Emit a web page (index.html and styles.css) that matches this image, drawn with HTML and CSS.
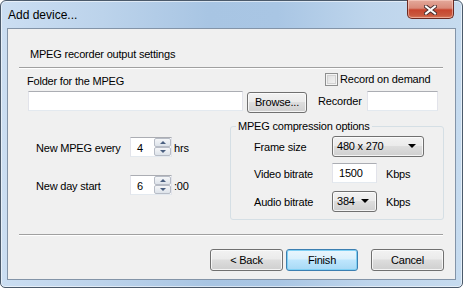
FILE: index.html
```html
<!DOCTYPE html>
<html>
<head>
<meta charset="utf-8">
<title>Add device...</title>
<link rel="stylesheet" href="styles.css">
</head>
<body>
<div class="window">
  <div class="titlebar">
    <span class="title">Add device...</span>
    <div class="close">
      <svg width="13" height="10" viewBox="0 0 13 10">
        <path d="M2 1.5 L11 8.5 M11 1.5 L2 8.5" stroke="#4a3030" stroke-width="4" stroke-linecap="square" fill="none"/>
        <path d="M2 1.5 L11 8.5 M11 1.5 L2 8.5" stroke="#ffffff" stroke-width="2" stroke-linecap="square" fill="none"/>
      </svg>
    </div>
  </div>
  <div class="client">
    <div class="section-title">MPEG recorder output settings</div>
    <div class="sep sep-top"></div>
    <div class="row-folder-label">
      <span class="folder-label">Folder for the MPEG</span>
      <div class="check"><span class="box"></span><span class="check-text">Record on demand</span></div>
    </div>
    <div class="row-folder">
      <div class="input folder-input"></div>
      <div class="btn browse">Browse...</div>
      <span class="rec-label">Recorder</span>
      <div class="input rec-input"></div>
    </div>
    <div class="area">
      <div class="left">
        <div class="spin-row first">
          <span class="spin-label">New MPEG every</span>
          <div class="spin input">
            <span class="spin-val">4</span>
            <div class="spin-btns"><span class="sb up"><i class="tri-up"></i></span><span class="sb down"><i class="tri-down"></i></span></div>
          </div>
          <span class="unit">hrs</span>
        </div>
        <div class="spin-row second">
          <span class="spin-label">New day start</span>
          <div class="spin input">
            <span class="spin-val">6</span>
            <div class="spin-btns"><span class="sb up"><i class="tri-up"></i></span><span class="sb down"><i class="tri-down"></i></span></div>
          </div>
          <span class="unit">:00</span>
        </div>
      </div>
      <fieldset class="group">
        <legend>MPEG compression options</legend>
        <div class="opt-row r1">
          <span class="opt-label">Frame size</span>
          <div class="combo frame"><span class="combo-text">480 x 270</span><i class="combo-arrow"></i></div>
        </div>
        <div class="opt-row r2">
          <span class="opt-label">Video bitrate</span>
          <div class="input video"><span class="input-text">1500</span></div>
          <span class="kbps">Kbps</span>
        </div>
        <div class="opt-row r3">
          <span class="opt-label">Audio bitrate</span>
          <div class="combo audio"><span class="combo-text">384</span><i class="combo-arrow"></i></div>
          <span class="kbps">Kbps</span>
        </div>
      </fieldset>
    </div>
    <div class="sep sep-bottom"></div>
    <div class="buttons">
      <div class="btn back">&lt; Back</div>
      <div class="btn finish">Finish</div>
      <div class="btn cancel">Cancel</div>
    </div>
  </div>
</div>
</body>
</html>
```
FILE: styles.css
```css
* { box-sizing: border-box; }
html, body { margin: 0; padding: 0; }
body {
  font: 11px/13px "Liberation Sans", Arial, sans-serif;
  letter-spacing: -0.2px;
  color: #000;
  background: #fff;
}
.window {
  width: 463px;
  height: 288px;
  border: 1px solid #4b5a6b;
  border-radius: 6px 6px 5px 5px;
  background: linear-gradient(90deg, #cbdef2 0%, #bcd3eb 22%, #a8c5e3 45%, #a9c6e4 60%, #bed5ec 80%, #c6dbef 100%);
  padding: 0 6px 7px 6px;
  display: flex;
  flex-direction: column;
  box-shadow: inset 0 0 0 1px rgba(255,255,255,0.55);
}
.titlebar {
  height: 27px;
  display: flex;
  align-items: flex-start;
}
.title {
  font-size: 12px;
  line-height: 14px;
  letter-spacing: 0;
  margin: 7px 0 0 1px;
  color: #000;
}
.close {
  margin-left: auto;
  margin-right: 2px;
  margin-top: -1px;
  width: 47px;
  height: 19px;
  border: 1px solid #6b2a22;
  border-top: none;
  border-radius: 0 0 5px 5px;
  background: linear-gradient(#e4a99b 0%, #d98a79 45%, #c7452e 55%, #c9583e 85%, #d97a5c 100%);
  box-shadow: inset 0 0 0 1px rgba(255,220,210,0.5);
  display: flex;
  align-items: center;
  justify-content: center;
}
.close svg { display: block; margin-top: 1px; }
.client {
  flex: 1;
  border: 1px solid #8394a8;
  background: #f0f0f0;
  display: flex;
  flex-direction: column;
}
.section-title {
  margin: 19px 0 0 22px;
}
.sep {
  width: 424px;
  height: 2px;
  margin-left: 11px;
  border-top: 1px solid #a0a0a0;
  border-bottom: 1px solid #ffffff;
}
.sep-top { margin-top: 6px; }
.row-folder-label {
  display: flex;
  margin: 3px 0 0 19px;
  height: 14px;
}
.folder-label {
  width: 298px;
  margin-top: 3px;
}
.check {
  display: flex;
  align-items: flex-start;
}
.box {
  width: 13px;
  height: 13px;
  margin-top: 1px;
  border: 1px solid #8e8f8f;
  background: linear-gradient(135deg, #dcdcdc, #f6f6f6);
  box-shadow: inset 0 0 0 1px #f4f4f4, inset 0 0 0 2px #d2d2d2;
}
.check-text { margin-left: 2px; margin-top: 1px; }
.row-folder {
  display: flex;
  margin: 5px 0 0 20px;
  align-items: flex-start;
}
.input {
  height: 20px;
  background: #fff;
  border: 1px solid #e2e3ea;
  border-top-color: #abadb3;
  border-bottom-color: #e3e9ef;
}
.folder-input { width: 215px; }
.btn {
  height: 22px;
  border: 1px solid #707070;
  border-radius: 3px;
  background: linear-gradient(#f2f2f2 0%, #ebebeb 45%, #dddddd 50%, #cfcfcf 100%);
  box-shadow: inset 0 0 0 1px rgba(252,252,252,0.8);
  display: flex;
  align-items: center;
  justify-content: center;
  line-height: 13px;
}
.browse {
  width: 60px;
  height: 21px;
  margin: 1px 0 0 4px;
}
.rec-label {
  width: 49px;
  margin-left: 11px;
  margin-top: 4px;
}
.rec-input { width: 71px; }
.area {
  display: flex;
  margin-top: 7px;
  align-items: flex-start;
}
.left {
  width: 222px;
  padding-left: 28px;
}
.spin-row {
  display: flex;
  align-items: center;
  height: 20px;
}
.spin-row.first { margin-top: 17px; }
.spin-row.second { margin-top: 18px; }
.spin-label { width: 94px; padding-top: 2px; }
.spin {
  width: 42px;
  display: flex;
  justify-content: space-between;
  align-items: stretch;
}
.spin-val { padding-left: 6px; line-height: 18px; padding-top: 1px; }
.spin-btns {
  width: 17px;
  display: flex;
  flex-direction: column;
  justify-content: space-between;
}
.sb {
  height: 9px;
  border: 1px solid #b7bcc6;
  border-radius: 2px;
  background: linear-gradient(#f5f6f8, #dde3ea);
  display: flex;
  align-items: center;
  justify-content: center;
}
.tri-up, .tri-down {
  display: block;
  width: 0;
  height: 0;
  border-left: 3px solid transparent;
  border-right: 3px solid transparent;
}
.tri-up { border-bottom: 3px solid #4a5f80; }
.tri-down { border-top: 3px solid #4a5f80; }
.unit { margin-left: 2px; padding-top: 2px; }
.group {
  margin: 0;
  padding: 0 0 8px 0;
  width: 214px;
  border: 1px solid #d5dfe5;
  border-radius: 3px;
  min-width: 0;
}
.group legend {
  padding: 0 2px;
  margin-left: 5px;
  line-height: 13px;
}
.opt-row {
  display: flex;
  align-items: center;
  height: 20px;
  margin-left: 23px;
}
.opt-row.r1 { margin-top: 3px; }
.opt-row.r2 { margin-top: 7px; }
.opt-row.r3 { margin-top: 8px; }
.opt-label { width: 78px; padding-top: 3px; }
.combo {
  height: 21px;
  border: 1px solid #707070;
  border-radius: 3px;
  background: linear-gradient(#f2f2f2 0%, #ebebeb 45%, #dddddd 50%, #cfcfcf 100%);
  box-shadow: inset 0 0 0 1px rgba(252,252,252,0.8);
  display: flex;
  align-items: center;
  justify-content: space-between;
  padding: 0 7px 0 4px;
}
.combo.frame { width: 92px; }
.combo.audio { width: 45px; }
.combo-arrow {
  display: block;
  width: 0;
  height: 0;
  border-left: 4px solid transparent;
  border-right: 4px solid transparent;
  border-top: 4px solid #000;
}
.input.video { width: 45px; display: flex; align-items: center; padding-left: 6px; }
.kbps { margin-left: 9px; padding-top: 3px; }
.sep-bottom { margin-top: 14px; }
.buttons {
  display: flex;
  margin: 13px 0 0 202px;
}
.back { width: 73px; }
.finish {
  width: 72px;
  margin-left: 3px;
  border-color: #3c7fb1;
  background: linear-gradient(#eaf6fd 0%, #d9f0fc 45%, #bee6fd 50%, #a7d9f5 100%);
  box-shadow: inset 0 0 0 1px #7fd0f4;
}
.cancel { width: 73px; margin-left: 13px; }
```
